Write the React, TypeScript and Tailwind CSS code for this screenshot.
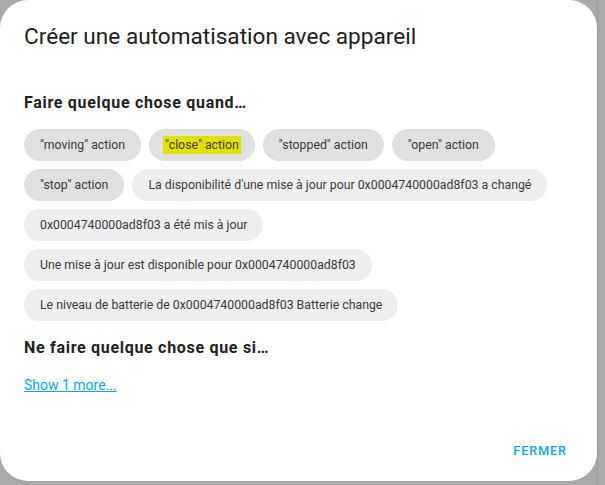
const triggers: { label: string; tone: 'dark' | 'light'; highlight?: boolean }[] = [
  { label: '"moving" action', tone: 'dark' },
  { label: '"close" action', tone: 'dark', highlight: true },
  { label: '"stopped" action', tone: 'dark' },
  { label: '"open" action', tone: 'dark' },
  { label: '"stop" action', tone: 'dark' },
  { label: "La disponibilité d'une mise à jour pour 0x0004740000ad8f03 a changé", tone: 'light' },
  { label: '0x0004740000ad8f03 a été mis à jour', tone: 'light' },
  { label: 'Une mise à jour est disponible pour 0x0004740000ad8f03', tone: 'light' },
  { label: 'Le niveau de batterie de 0x0004740000ad8f03 Batterie change', tone: 'light' },
]

export default function App() {
  return (
    <div
      className="w-[605px] h-[485px] bg-[#a9a9a9] overflow-hidden flex"
      style={{ fontFamily: 'Roboto, "Noto Sans", sans-serif' }}
    >
      <div className="w-[597px] h-[481px] shrink-0 bg-white rounded-[28px] flex flex-col px-6 pt-[23px]">
        <h1 className="text-[22.6px] leading-[28px] text-[#212121] font-normal">
          Créer une automatisation avec appareil
        </h1>

        <h2 className="mt-[40px] text-[16px] leading-[24px] font-bold text-[#212121] tracking-[0.7px]">
          Faire quelque chose quand…
        </h2>

        <div className="mt-[14px] flex flex-wrap gap-2">
          {triggers.map((t) => (
            <div
              key={t.label}
              className={
                t.tone === 'dark'
                  ? 'h-8 px-4 rounded-full bg-[#e0e0e0] text-[12.3px] text-[#3b3b3b] flex items-center'
                  : 'h-8 px-4 rounded-full bg-[#eeeeee] text-[12.3px] text-[#3b3b3b] flex items-center'
              }
            >
              {t.highlight ? <span className="bg-[#e1e100] px-0.5 -mx-0.5">{t.label}</span> : t.label}
            </div>
          ))}
        </div>

        <h2 className="mt-[15px] text-[16px] leading-[24px] font-bold text-[#212121] tracking-[0.7px]">
          Ne faire quelque chose que si…
        </h2>

        <a href="#" className="mt-[15px] self-start text-[14px] leading-[20px] text-[#03a9f4] underline">
          Show 1 more...
        </a>

        <div className="mt-auto mb-[12px] flex justify-end -mr-[2px]">
          <button className="px-2 h-9 text-[12.5px] font-medium tracking-[1px] text-[#03a9f4] uppercase">
            Fermer
          </button>
        </div>
      </div>
      <div className="w-px h-full bg-[#9a9a9a]" />
    </div>
  )
}
